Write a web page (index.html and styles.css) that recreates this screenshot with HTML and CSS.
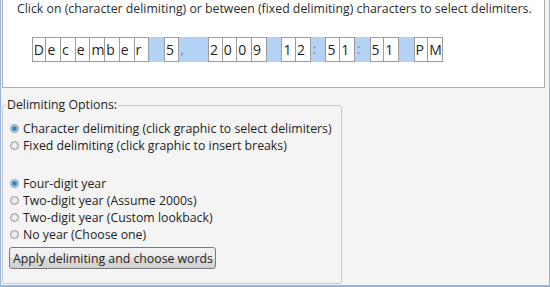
FILE: index.html
```html
<!DOCTYPE html>
<html lang="en">

<head>
    <meta charset="UTF-8">
    <title>Delimiting</title>
    <link rel="stylesheet" href="styles.css">
</head>

<body>
    <div class="window">
        <!-- 날짜 문자 선택 영역 -->
        <div class="panel">
            <p class="hint">Click on (character delimiting) or between (fixed delimiting) characters to select delimiters.</p>
            <div class="chars">
                <span class="ch">D</span><span class="ch">e</span><span class="ch">c</span><span class="ch">e</span><span class="ch">m</span><span class="ch">b</span><span class="ch">e</span><span class="ch">r</span>
                <span class="gap"></span>
                <span class="ch">5</span>
                <span class="gap">,</span><span class="gap"></span>
                <span class="ch">2</span><span class="ch">0</span><span class="ch">0</span><span class="ch">9</span>
                <span class="gap"></span>
                <span class="ch">1</span><span class="ch">2</span>
                <span class="gap">:</span>
                <span class="ch">5</span><span class="ch">1</span>
                <span class="gap">:</span>
                <span class="ch">5</span><span class="ch">1</span>
                <span class="gap"></span>
                <span class="ch">P</span><span class="ch">M</span>
            </div>
        </div>

        <!-- 옵션 -->
        <fieldset class="options">
            <legend>Delimiting Options:</legend>
            <div class="group">
                <label class="opt"><input type="radio" name="mode" checked>Character delimiting (click graphic to select delimiters)</label>
                <label class="opt"><input type="radio" name="mode">Fixed delimiting (click graphic to insert breaks)</label>
            </div>
            <div class="group">
                <label class="opt"><input type="radio" name="year" checked>Four-digit year</label>
                <label class="opt"><input type="radio" name="year">Two-digit year (Assume 2000s)</label>
                <label class="opt"><input type="radio" name="year">Two-digit year (Custom lookback)</label>
                <label class="opt"><input type="radio" name="year">No year (Choose one)</label>
            </div>
            <button class="apply">Apply delimiting and choose words</button>
        </fieldset>
    </div>
</body>

</html>
```

FILE: styles.css
```css
/* 초기화 */
* {
    box-sizing: border-box;
}

body {
    margin: 0;
    font-family: "Segoe UI", "Open Sans", sans-serif;
    font-size: 12.3px;
    color: #1e1e1e;
}

/* 창 */
.window {
    width: 550px;
    height: 287px;
    background: #f4f4f4;
    border: 1px solid #98b4da;
    border-top: 0;
    border-bottom-width: 2px;
    padding: 0 4px 0 1px;
}

/* 상단 흰 패널 */
.panel {
    height: 88px;
    background: #fff;
    border: 1px solid #ababab;
    border-top: 0;
    padding: 1px 0 0 14px;
}

.hint {
    margin: 0;
    line-height: 16px;
    color: #2d2d2d;
}

.chars {
    display: flex;
    margin: 20px 0 0 14.7px;
    font-size: 14px;
}

.chars .ch,
.chars .gap {
    width: 14.7px;
    height: 25px;
    line-height: 23px;
}

.chars .ch {
    background: #fff;
    border: 1px solid #9c9c9c;
    padding-left: 1px;
}

.chars .ch + .ch {
    border-left: 0;
}

.chars .gap {
    background: #b4d2f5;
    color: #7d8ea6;
    padding-left: 2px;
}

/* 옵션 */
.options {
    height: 187px;
    width: 340px;
    margin: 9px 0 0;
    padding: 7px 3px 0;
    border: 1px solid #c9c9c9;
    border-radius: 3px;
}

.options legend {
    padding: 0 1px;
    line-height: 16px;
}

.group {
    margin-bottom: 21px;
}

.group + .group {
    margin-bottom: 4px;
}

.opt {
    display: flex;
    align-items: center;
    height: 17px;
}

.opt input {
    appearance: none;
    width: 9px;
    height: 9px;
    margin: 0 4px;
    border: 1px solid #979797;
    border-radius: 50%;
    background: radial-gradient(circle, #f8f8f8 0, #dcdcdc 4px);
}

.opt input:checked {
    background: radial-gradient(circle, #1d6bb0 0, #3a94d8 2px, #a9d2ef 3px, #e6e6e6 4px);
}

.apply {
    width: 207px;
    height: 22px;
    margin-left: 3px;
    padding: 0 0 0 3px;
    text-align: left;
    font: inherit;
    color: #1e1e1e;
    border: 1px solid #7a7a7a;
    border-radius: 3px;
    background: linear-gradient(#f3f3f3, #ebebeb 50%, #dddddd 50%, #d0d0d0);
}
```
